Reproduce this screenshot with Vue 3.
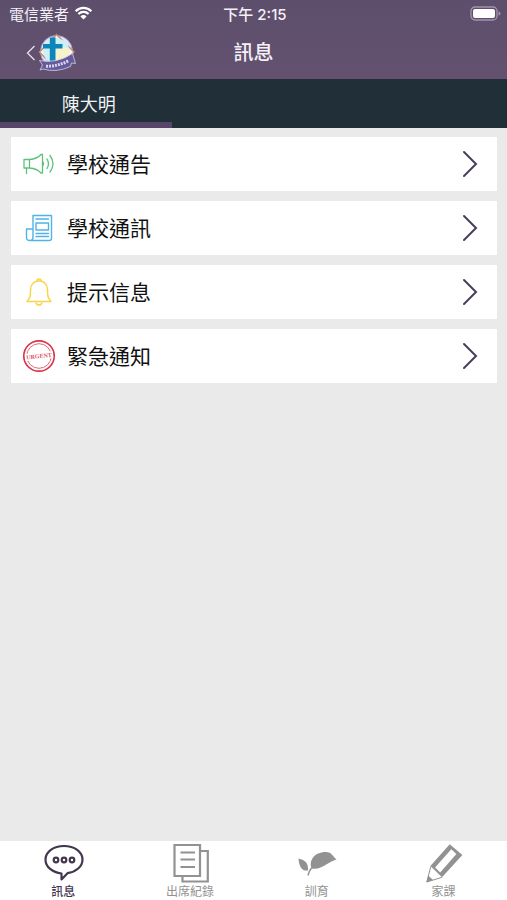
<script setup>
import { ref } from 'vue'

const messages = [
  { id: 'notice', label: '學校通告' },
  { id: 'news', label: '學校通訊' },
  { id: 'reminder', label: '提示信息' },
  { id: 'urgent', label: '緊急通知' },
]

const tabs = [
  { id: 'messages', label: '訊息' },
  { id: 'attendance', label: '出席紀錄' },
  { id: 'discipline', label: '訓育' },
  { id: 'homework', label: '家課' },
]

const activeTab = ref('messages')
</script>

<template>
  <div class="app">
    <header class="header">
      <div class="status">
        <div class="carrier">
          <span>電信業者</span>
          <svg class="wifi" viewBox="0 0 18 14" aria-hidden="true">
            <path d="M1.2 5.2A11 11 0 0 1 16.8 5.2M3.9 8A7.2 7.2 0 0 1 14.1 8" fill="none" stroke="#fff" stroke-width="2.3" />
            <path d="M9 13.6L5.9 10.4A4.4 4.4 0 0 1 12.1 10.4Z" fill="#fff" />
          </svg>
        </div>
        <time class="clock">下午 2:15</time>
        <svg class="battery" viewBox="0 0 31 15" aria-hidden="true">
          <rect x="1" y="1" width="26" height="13" rx="4" fill="none" stroke="#a493ac" stroke-width="1.3" />
          <rect x="3" y="3" width="22" height="9" rx="2" fill="#fff" />
          <path d="M28.5 5.3Q30.5 6 30.5 7.5T28.5 9.7Z" fill="#a493ac" />
        </svg>
      </div>
      <div class="navbar">
        <button class="back" type="button" aria-label="返回">
          <svg class="back-arrow" viewBox="0 0 10 18" aria-hidden="true">
            <path d="M8.5 2L1.5 9L8.5 16" fill="none" stroke="#e9e1ec" stroke-width="1.3" />
          </svg>
          <svg class="crest" viewBox="0 0 38 40" aria-hidden="true">
            <circle cx="18.5" cy="18.500" r="16" fill="#e6e6f6" stroke="#a99cc8" stroke-width="1" />
            <path d="M18.500 1.500L36 19L18.500 37L1.500 19Z" fill="#f4f7fa" stroke="#c08a6c" stroke-width="1.4" />
            <path d="M8 9L18 4L29 9L32 18L29 27L18 32L8 27L4.500 18Z" fill="#cdf0f8" />
            <path d="M17 17Q25 12 32 16L32 19L28 28L17 30Z" fill="#f6f2cc" />
            <path d="M11.800 4.500H17.500V11H24.500V15.500H17.500V30H11.800V15.500H5V11H11.800Z" fill="#0a86b8" />
            <path d="M1.500 27.500Q19 31 34.500 20.500L37.500 30.500L33.500 30L32.500 33.500Q18 40 5 36L2 37L4.500 32Z" fill="#655a9c" stroke="#d3cfe6" stroke-width=".8" />
            <path d="M8 33.300Q20 33.500 31 27.500" fill="none" stroke="#d9d4ea" stroke-width="3" stroke-dasharray="2 1" />
          </svg>
        </button>
        <h1 class="title">訊息</h1>
      </div>
    </header>

    <nav class="students">
      <button class="student" type="button">陳大明</button>
    </nav>

    <main class="content">
      <a v-for="item in messages" :key="item.id" class="card" href="#">
        <svg v-if="item.id === 'notice'" class="icon" viewBox="0 0 34 34" fill="none" stroke="#5cc279" stroke-width="1.3" stroke-linejoin="round" stroke-linecap="round" aria-hidden="true">
          <path d="M2 12.500H7.500V21H2ZM7.500 12.500Q15 12 19 7.500H20.500V26H19Q15 21.500 7.500 21M4.500 21V26.500M20.500 14.500Q22.500 16.700 20.500 19M25 12Q28 16.700 25 21.500M28 8.500Q34 16.700 28 25" />
        </svg>
        <svg v-else-if="item.id === 'news'" class="icon" viewBox="0 0 34 34" fill="none" stroke="#4fb3e8" stroke-width="1.4" stroke-linejoin="round" stroke-linecap="round" aria-hidden="true">
          <path d="M11 4.500H29.500V27.500Q29.500 29.500 27 29.500H8M11 4.500V26.500Q11 29.500 8 29.500Q4.500 29.500 4.500 26.500V18H11M14 8H26.500M14 12H26.500V19H14ZM14 22.500H26.500M14 25.500H26.500" />
        </svg>
        <svg v-else-if="item.id === 'reminder'" class="icon" viewBox="0 0 34 34" fill="none" stroke="#f8d447" stroke-width="1.5" stroke-linejoin="round" aria-hidden="true">
          <path d="M17 6C11.500 6 8.500 10 8.500 15C8.500 21 8 23 5 26.500H29C26 23 25.500 21 25.500 15C25.500 10 22.500 6 17 6Z" />
          <path d="M14.800 6Q15 4 17 4T19.200 6M14 27.500Q14.500 30 17 30T20 27.500" />
        </svg>
        <svg v-else class="icon" viewBox="0 0 34 34" aria-hidden="true">
          <circle cx="17" cy="17" r="15.200" fill="none" stroke="#d93448" stroke-width="1.7" />
          <circle cx="17" cy="17" r="12.300" fill="none" stroke="#e2697a" stroke-width="1" />
          <rect x="3" y="13.500" width="28" height="7" fill="#fff" transform="rotate(-6 17 17)" />
          <text x="17" y="19.200" text-anchor="middle" class="stamp" transform="rotate(-6 17 17)">URGENT</text>
        </svg>
        <span class="card-label">{{ item.label }}</span>
        <svg class="chevron" viewBox="0 0 16 28" aria-hidden="true">
          <path d="M2 2L14 14L2 26" fill="none" stroke="#493e5e" stroke-width="2" stroke-linecap="round" />
        </svg>
      </a>
    </main>

    <nav class="tabbar">
      <button
        v-for="tab in tabs"
        :key="tab.id"
        type="button"
        class="tab"
        :class="{ active: tab.id === activeTab }"
        @click="activeTab = tab.id"
      >
        <svg v-if="tab.id === 'messages'" class="tab-icon" viewBox="0 0 42 40" fill="none" stroke="currentColor" stroke-width="2.200" stroke-linejoin="round" aria-hidden="true">
          <path d="M22 3C11.500 3 3.500 9 3.500 16.700C3.500 24 10.500 29.500 19.500 30.500V36.500L25.500 30.200C34 29 40.500 23.500 40.500 16.700C40.500 9 32.500 3 22 3Z" />
          <circle cx="14" cy="17" r="2.300" />
          <circle cx="22" cy="17" r="2.300" />
          <circle cx="30" cy="17" r="2.300" />
        </svg>
        <svg v-else-if="tab.id === 'attendance'" class="tab-icon" viewBox="0 0 42 40" fill="none" stroke="currentColor" stroke-width="2.200" aria-hidden="true">
          <path d="M5.500 2H31V33H5.500ZM31 8H38.800V38.500H13.500V33M11.500 9.500H26M11.500 16.500H26M11.500 24H26" />
        </svg>
        <svg v-else-if="tab.id === 'discipline'" class="tab-icon" viewBox="0 0 42 40" fill="currentColor" aria-hidden="true">
          <path d="M15.500 25.500C12.500 15.500 20 9 30 9C36 9 36.500 13.500 40.500 16.500C32 18.500 26 27.500 15.500 25.500Z" />
          <path d="M2.500 15.500C9 17 12.500 20 12 27.500C5.500 28.500 3 23 2.500 15.500Z" />
          <path d="M15.500 25Q13 28 12 32.500" fill="none" stroke="currentColor" stroke-width="1.500" />
        </svg>
        <svg v-else class="tab-icon" viewBox="0 0 42 40" aria-hidden="true">
          <path fill="currentColor" fill-rule="evenodd" d="M26.700 1.300L39.400 12L19 34.300L7.400 23ZM28.300 6.300L12.100 24.600L17.200 29.400L33.400 11.100Z" />
          <path d="M7.800 23.500L3.800 39L19 34.300" fill="none" stroke="currentColor" stroke-width="1" />
          <path d="M5.200 32.500L10 37L3.500 39.300Z" fill="currentColor" />
        </svg>
        <span>{{ tab.label }}</span>
      </button>
    </nav>
  </div>
</template>

<style>
body {
  margin: 0;
}
</style>

<style scoped>
.app {
  min-height: 100vh;
  display: flex;
  flex-direction: column;
  background: #eaeaea;
  color: #111;
  font-family: Inter, "Noto Sans CJK TC", sans-serif;
}

button {
  margin: 0;
  padding: 0;
  border: 0;
  background: none;
  font: inherit;
  cursor: pointer;
}

svg {
  display: block;
  flex: none;
}

.header {
  background: linear-gradient(#5d4f6c, #63516f);
  color: #f5f0f7;
}

.status {
  display: grid;
  grid-template-columns: 1fr auto 1fr;
  align-items: center;
  height: 26px;
  padding: 0 6px 0 9px;
  font-size: 15px;
}

.carrier {
  display: flex;
  align-items: center;
  gap: 5px;
}

.wifi {
  width: 19px;
  height: 14px;
}

.clock {
  font-weight: 500;
  font-size: 15px;
}

.battery {
  width: 31px;
  height: 15px;
  justify-self: end;
}

.navbar {
  display: grid;
  grid-template-columns: 1fr auto 1fr;
  align-items: center;
  height: 53px;
  padding: 0 26px;
}

.back {
  display: flex;
  align-items: center;
  gap: 2px;
  justify-self: start;
}

.back-arrow {
  width: 10px;
  height: 18px;
}

.crest {
  width: 38px;
  height: 40px;
}

.title {
  margin: 0;
  font-size: 20px;
  line-height: 28px;
  font-weight: 500;
}

.students {
  display: flex;
  height: 49px;
  background: #212f38;
}

.student {
  width: 34%;
  padding: 5px 0 0 5px;
  border-bottom: 6px solid #57466a;
  color: #eef2f4;
  font-size: 18px;
}

.content {
  flex: 1;
  display: flex;
  flex-direction: column;
  gap: 10px;
  padding: 9px 10px 10px 11px;
}

.card {
  display: flex;
  align-items: center;
  min-height: 54px;
  padding: 0 19px 0 11px;
  background: #fff;
  color: inherit;
  text-decoration: none;
  font-size: 21px;
  line-height: 30px;
}

.icon {
  width: 34px;
  height: 34px;
  margin-right: 11px;
}

.card-label {
  flex: 1;
  padding-top: 2px;
}

.chevron {
  width: 16px;
  height: 28px;
}

.stamp {
  fill: #dc5265;
  font: bold 6px "Liberation Serif", serif;
}

.tabbar {
  display: grid;
  grid-template-columns: repeat(4, 1fr);
  height: 59px;
  background: #fff;
}

.tab {
  display: flex;
  flex-direction: column;
  align-items: center;
  padding-top: 2px;
  color: #929292;
  font-size: 12px;
  line-height: 18px;
}

.tab.active {
  color: #43374f;
  font-weight: 500;
}

.tab-icon {
  width: 42px;
  height: 40px;
}
</style>
